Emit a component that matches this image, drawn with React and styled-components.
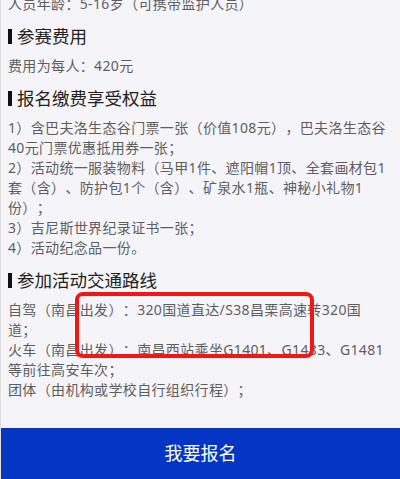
import React from "react";
import styled, { createGlobalStyle } from "styled-components";

const Global = createGlobalStyle`
  html, body { margin: 0; padding: 0; background: #f5f5f9; }
  body {
    font-family: "Noto Sans", "Noto Sans CJK SC", sans-serif;
    text-spacing-trim: space-all;
  }
`;

const Page = styled.div`
  position: relative;
  width: 400px;
  height: 479px;
  box-sizing: border-box;
  border-left: 1px solid #dedede;
  display: flex;
  flex-direction: column;
  overflow: hidden;
  background: #f5f5f9;
`;

const Content = styled.div`
  flex: 1;
  overflow: hidden;
  padding: 0 13px 0 7px;
`;

const Inner = styled.div`
  margin-top: -6px;
`;

const Heading = styled.h2`
  display: flex;
  align-items: center;
  margin: 10px 0 8px;
  font-size: 17.5px;
  line-height: 24px;
  font-weight: normal;
  color: #222;
  &::before {
    content: "";
    width: 4px;
    height: 15px;
    background: #111;
    margin-right: 5px;
    flex: none;
  }
`;

const Para = styled.p`
  margin: 0;
  font-size: 14px;
  line-height: 20px;
  letter-spacing: 0.35px;
  color: #5e5e5e;
  text-spacing-trim: space-all;
  font-kerning: none;
`;

const SignUp = styled.button`
  flex: none;
  height: 51px;
  border: none;
  margin: 0;
  padding: 0;
  background: #0536c3;
  color: #fff;
  font-family: inherit;
  font-size: 18px;
  line-height: 51px;
  text-align: center;
`;

const Highlight = styled.div`
  position: absolute;
  left: 74px;
  top: 292px;
  width: 239px;
  height: 66px;
  box-sizing: border-box;
  border: 4px solid #f21616;
  border-radius: 8px;
  pointer-events: none;
`;

export default function App() {
  return (
    <>
      <Global />
      <Page>
        <Content>
          <Inner>
            <Para>人员年龄：5-16岁（可携带监护人员）</Para>
            <Heading>参赛费用</Heading>
            <Para>费用为每人：420元</Para>
            <Heading>报名缴费享受权益</Heading>
            <Para>1）含巴夫洛生态谷门票一张（价值108元），巴夫洛生态谷40元门票优惠抵用券一张；</Para>
            <Para>2）活动统一服装物料（马甲1件、遮阳帽1顶、全套画材包1套（含）、防护包1个（含）、矿泉水1瓶、神秘小礼物1份）；</Para>
            <Para>3）吉尼斯世界纪录证书一张；</Para>
            <Para>4）活动纪念品一份。</Para>
            <Heading>参加活动交通路线</Heading>
            <Para>自驾（南昌出发）：320国道直达/S38昌栗高速转320国道；</Para>
            <Para>火车（南昌出发）：南昌西站乘坐G1401、G1483、G1481等前往高安车次；</Para>
            <Para>团体（由机构或学校自行组织行程）；</Para>
          </Inner>
        </Content>
        <SignUp>我要报名</SignUp>
        <Highlight />
      </Page>
    </>
  );
}
